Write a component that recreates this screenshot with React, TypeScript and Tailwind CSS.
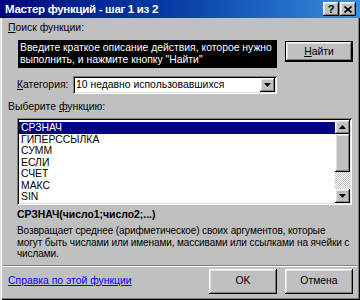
const raised =
  'shadow-[inset_-1px_-1px_#000,inset_1px_1px_#fff,inset_-2px_-2px_#808080,inset_2px_2px_#dfdfdf]'
const sunken =
  'shadow-[inset_1px_1px_#808080,inset_-1px_-1px_#fff,inset_2px_2px_#000,inset_-2px_-2px_#dfdfdf]'

function Arrow({ up = false }: { up?: boolean }) {
  return (
    <svg width="7" height="4" viewBox="0 0 7 4" className={up ? 'rotate-180' : ''}>
      <path d="M0 0h7L3.5 4z" fill="#000" />
    </svg>
  )
}

const functions = ['СРЗНАЧ', 'ГИПЕРССЫЛКА', 'СУММ', 'ЕСЛИ', 'СЧЕТ', 'МАКС', 'SIN']

export default function App() {
  return (
    <div className="flex h-[300px] w-[360px] flex-col overflow-hidden whitespace-nowrap bg-[#c0c0c0] font-['Liberation_Sans',Arial,sans-serif] text-[10.4px] leading-[12px] text-black shadow-[inset_1px_1px_#dfdfdf,inset_2px_2px_#fff,inset_-1px_-1px_#000,inset_-2px_-2px_#808080]">
      {/* title bar */}
      <div className="flex h-[18px] shrink-0 items-center bg-gradient-to-r from-[#000080] via-[#0a3fa8] to-[#3a8ee0] pl-[5px] pr-[4px]">
        <span className="flex-1 text-[11.5px] font-bold tracking-[-0.3px] text-white">
          Мастер функций - шаг 1 из 2
        </span>
        <div className="flex gap-[1px]">
          <button
            type="button"
            className={`flex h-[14px] w-[16px] items-center justify-center bg-[#c0c0c0] text-[11px] font-bold leading-none ${raised}`}
          >
            ?
          </button>
          <button
            type="button"
            className={`flex h-[14px] w-[16px] items-center justify-center bg-[#c0c0c0] ${raised}`}
          >
            <svg width="8" height="7" viewBox="0 0 8 7">
              <path d="M0.5 0.5l7 6M7.5 0.5l-7 6" stroke="#000" strokeWidth="1.6" />
            </svg>
          </button>
        </div>
      </div>

      <div className="flex flex-1 flex-col px-[8px]">
        <div className="mt-[4px]">
          <span className="underline">П</span>оиск функции:
        </div>

        <div className="mt-[6px] flex items-start">
          <div className="ml-[10px] h-[28px] w-[259px] overflow-hidden bg-black px-[2px] pt-[2px] leading-[12px] text-white">
            Введите краткое описание действия, которое нужно
            <br />
            выполнить, и нажмите кнопку "Найти"
          </div>
          <button
            type="button"
            className="ml-[9px] mt-[2px] h-[19px] w-[66px] bg-[#c0c0c0] shadow-[inset_-1px_-1px_#000,inset_1px_1px_#fff,inset_-2px_-2px_#808080,inset_2px_2px_#dfdfdf,0_0_0_1px_#000]"
          >
            <span className="underline">Н</span>айти
          </button>
        </div>

        <div className="mt-[8px] flex h-[18px] items-center">
          <span className="ml-[9px] w-[56px]">
            <span className="underline">К</span>атегория:
          </span>
          <div className={`flex h-[18px] w-[204px] items-center bg-white pl-[3px] pr-[2px] ${sunken}`}>
            <span className="flex-1">10 недавно использовавшихся</span>
            <div className={`flex h-[14px] w-[15px] items-center justify-center bg-[#c0c0c0] ${raised}`}>
              <Arrow />
            </div>
          </div>
        </div>

        <div className="mt-[7px]">
          Выберите <span className="underline">ф</span>ункцию:
        </div>

        <div className={`ml-[9px] mt-[5px] flex h-[87px] w-[335px] bg-white p-[2px] ${sunken}`}>
          <div className="flex-1 overflow-hidden pt-[2px]">
            {functions.map((f, i) => (
              <div
                key={f}
                className={`h-[11.5px] pl-[2px] leading-[11.5px] ${i === 0 ? 'bg-[#000080] text-white' : ''}`}
              >
                {f}
              </div>
            ))}
          </div>
          <div className="flex w-[15px] flex-col">
            <div className={`flex h-[14px] items-center justify-center bg-[#c0c0c0] ${raised}`}>
              <Arrow up />
            </div>
            <div className={`h-[38px] bg-[#c0c0c0] ${raised}`} />
            <div className="flex-1 bg-[repeating-conic-gradient(#c0c0c0_0_25%,#fff_0_50%)] bg-[length:2px_2px]" />
            <div className={`flex h-[14px] items-center justify-center bg-[#c0c0c0] ${raised}`}>
              <Arrow />
            </div>
          </div>
        </div>

        <div className="ml-[9px] mt-[4px] font-bold">СРЗНАЧ(число1;число2;...)</div>
        <div className="ml-[9px] mt-[4px] text-[10px] leading-[11.5px] tracking-[-0.1px]">
          Возвращает среднее (арифметическое) своих аргументов, которые
          <br />
          могут быть числами или именами, массивами или ссылками на ячейки с
          <br />
          числами.
        </div>

        <div className="-mx-[5px] mt-[5px] border-t border-b border-t-[#808080] border-b-white" />

        <div className="flex items-start">
          <a className="mt-[8px] flex-1 text-[#0000ff] underline">Справка по этой функции</a>
          <button
            type="button"
            className={`mt-[2px] h-[25px] w-[68px] bg-[#c0c0c0] ${raised}`}
          >
            OK
          </button>
          <button
            type="button"
            className={`ml-[8px] mr-[-1px] mt-[2px] h-[25px] w-[68px] bg-[#c0c0c0] ${raised}`}
          >
            Отмена
          </button>
        </div>
      </div>
    </div>
  )
}
